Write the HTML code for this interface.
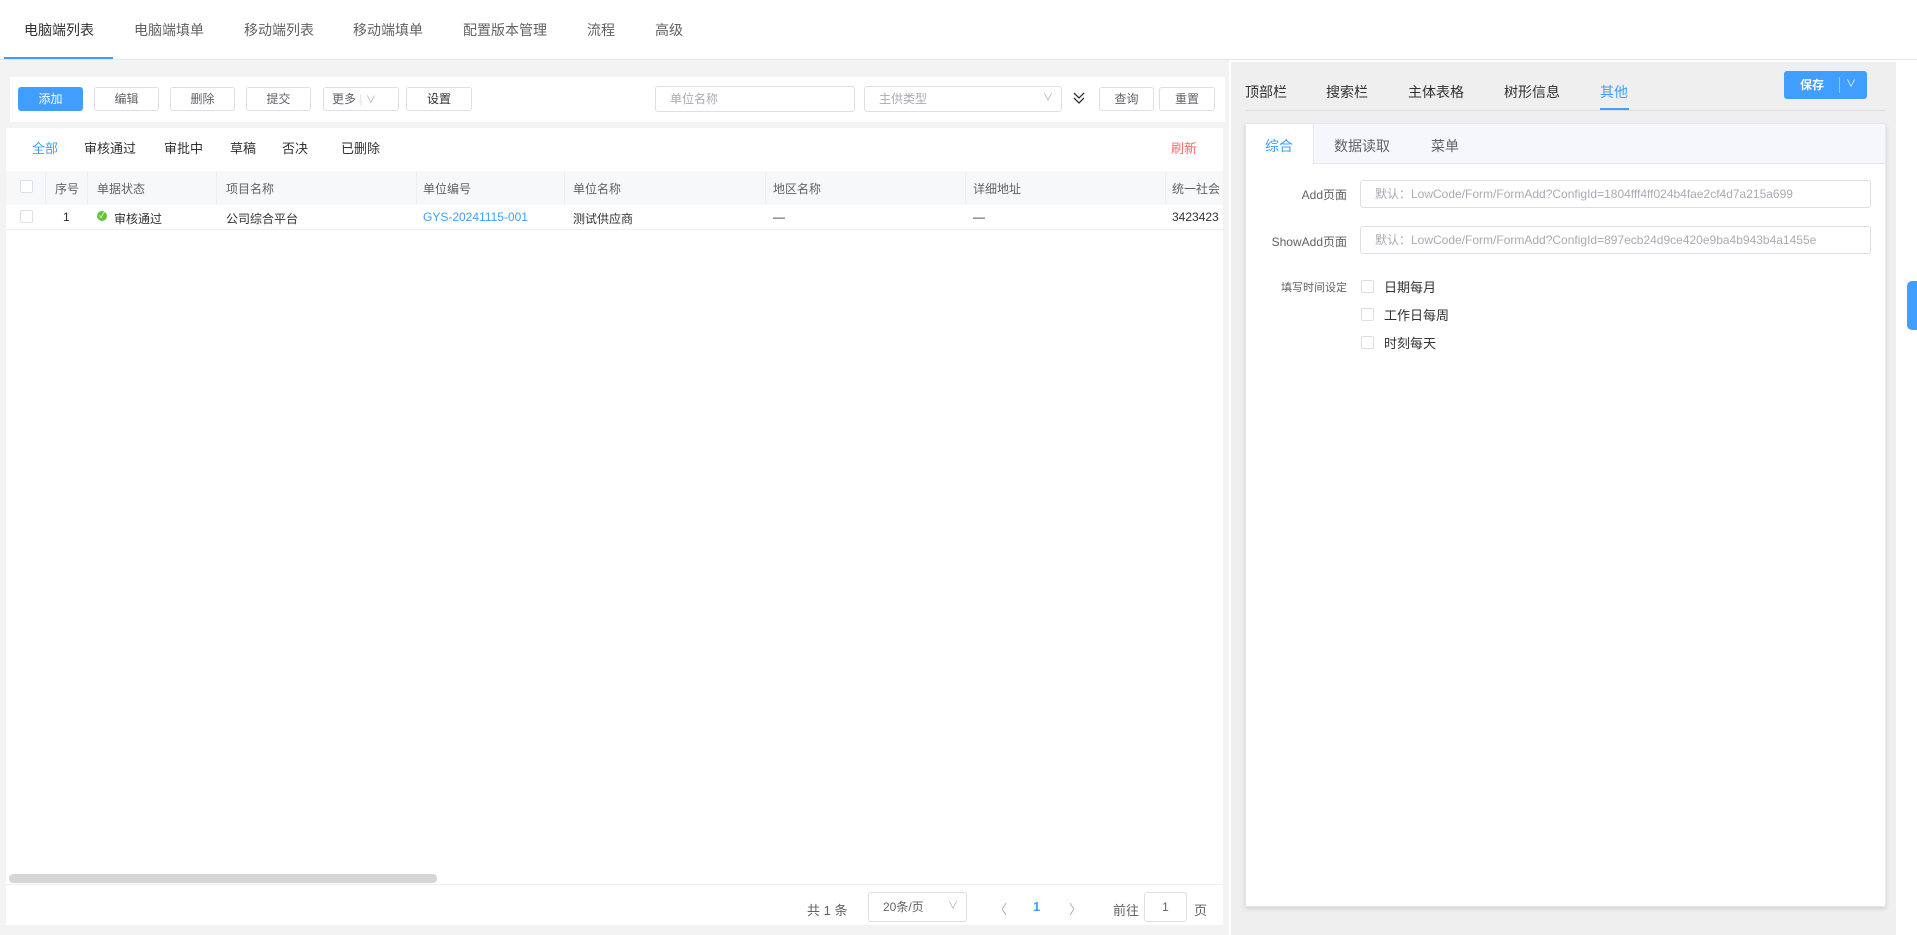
<!DOCTYPE html>
<html><head><meta charset="utf-8"><style>
*{box-sizing:border-box;margin:0;padding:0}
body{width:1917px;height:935px;background:#fff;font-family:"Liberation Sans","Noto Sans CJK SC",sans-serif;color:#303133;position:relative;overflow:hidden;font-size:12px}
.a{position:absolute;white-space:nowrap}
.btn{position:absolute;top:87px;height:24px;border:1px solid #dcdfe6;border-radius:3px;background:#fff;color:#606266;font-size:12px;text-align:center;line-height:22px}
.inp{position:absolute;border:1px solid #dcdfe6;border-radius:3px;background:#fff;color:#a8abb2;font-size:12px;padding-left:14px;line-height:24px}
.th{position:absolute;top:180px;color:#606266;font-size:12px}
.vl{position:absolute;top:171px;height:34px;width:1px;background:#ebeef5}
.cb{position:absolute;width:13px;height:13px;border:1px solid #dcdfe6;background:#fff;border-radius:2px}
</style></head><body>
<div class="a" style="left:24px;top:20px;font-size:14px;color:#303133">电脑端列表</div>
<div class="a" style="left:134px;top:20px;font-size:14px;color:#606266">电脑端填单</div>
<div class="a" style="left:244px;top:20px;font-size:14px;color:#606266">移动端列表</div>
<div class="a" style="left:353px;top:20px;font-size:14px;color:#606266">移动端填单</div>
<div class="a" style="left:463px;top:20px;font-size:14px;color:#606266">配置版本管理</div>
<div class="a" style="left:587px;top:20px;font-size:14px;color:#606266">流程</div>
<div class="a" style="left:655px;top:20px;font-size:14px;color:#606266">高级</div>
<div class="a" style="left:0;top:59px;width:1917px;height:1px;background:#e4e7ed"></div>
<div class="a" style="left:4px;top:57px;width:109px;height:2px;background:#409eff"></div>
<div class="a" style="left:0;top:60px;width:1229px;height:875px;background:#f3f3f3"></div>
<div class="a" style="left:10px;top:77px;width:1215px;height:45px;background:#fff"></div>
<div class="btn" style="left:18px;width:65px;background:#409eff;border-color:#409eff;color:#fff">添加</div>
<div class="btn" style="left:94px;width:65px">编辑</div>
<div class="btn" style="left:170px;width:65px">删除</div>
<div class="btn" style="left:246px;width:65px">提交</div>
<div class="btn" style="left:323px;width:76px;text-align:left;padding-left:8px">更多 <span style="color:#dcdfe6">|</span> <span style="font-size:10px;color:#a8abb2">∨</span></div>
<div class="btn" style="left:406px;width:66px;color:#303133">设置</div>
<div class="inp" style="left:655px;top:86px;width:200px;height:26px">单位名称</div>
<div class="inp" style="left:864px;top:86px;width:198px;height:26px">主供类型<span style="position:absolute;right:8px;font-size:10px">∨</span></div>
<svg class="a" style="left:1072px;top:91px" width="14" height="14" viewBox="0 0 14 14"><path d="M2 2 L7 7 L12 2 M2 7 L7 12 L12 7" fill="none" stroke="#303133" stroke-width="1.3"/></svg>
<div class="btn" style="left:1099px;width:55px">查询</div>
<div class="btn" style="left:1159px;width:56px">重置</div>
<div class="a" style="left:6px;top:128px;width:1217px;height:797px;background:#fff"></div>
<div class="a" style="left:32px;top:138px;font-size:13px;color:#409eff">全部</div>
<div class="a" style="left:84px;top:138px;font-size:13px">审核通过</div>
<div class="a" style="left:164px;top:138px;font-size:13px">审批中</div>
<div class="a" style="left:230px;top:138px;font-size:13px">草稿</div>
<div class="a" style="left:282px;top:138px;font-size:13px">否决</div>
<div class="a" style="left:341px;top:138px;font-size:13px">已删除</div>
<div class="a" style="left:1171px;top:138px;font-size:13px;color:#f56c6c">刷新</div>
<div class="a" style="left:6px;top:171px;width:1217px;height:34px;background:#f7f8fa"></div>
<div class="cb" style="left:20px;top:180px"></div>
<div class="th" style="left:55px">序号</div><div class="th" style="left:97px">单据状态</div>
<div class="th" style="left:226px">项目名称</div><div class="th" style="left:423px">单位编号</div>
<div class="th" style="left:573px">单位名称</div><div class="th" style="left:773px">地区名称</div>
<div class="th" style="left:973px">详细地址</div><div class="th" style="left:1172px">统一社会</div>
<div class="vl" style="left:45px"></div><div class="vl" style="left:87px"></div><div class="vl" style="left:216px"></div><div class="vl" style="left:416px"></div><div class="vl" style="left:564px"></div><div class="vl" style="left:765px"></div><div class="vl" style="left:965px"></div><div class="vl" style="left:1165px"></div>
<div class="a" style="left:6px;top:205px;width:1217px;height:25px;background:#fff;border-bottom:1px solid #f0f0f0"></div>
<div class="cb" style="left:20px;top:210px"></div>
<div class="a" style="left:63px;top:210px">1</div>
<div class="a" style="left:97px;top:211px;width:10px;height:10px;border-radius:50%;background:#67c23a;color:#fff;font-size:8px;line-height:10px;text-align:center">✓</div>
<div class="a" style="left:114px;top:210px">审核通过</div>
<div class="a" style="left:226px;top:210px">公司综合平台</div>
<div class="a" style="left:423px;top:210px;color:#409eff">GYS-20241115-001</div>
<div class="a" style="left:573px;top:210px">测试供应商</div>
<div class="a" style="left:773px;top:210px">—</div>
<div class="a" style="left:973px;top:210px">—</div>
<div class="a" style="left:1172px;top:210px">3423423</div>
<div class="a" style="left:9px;top:874px;width:428px;height:9px;border-radius:4px;background:#d6d6d6"></div>
<div class="a" style="left:6px;top:884px;width:1217px;height:1px;background:#ebeef5"></div>
<div class="a" style="left:807px;top:900px;font-size:13px;color:#606266">共 1 条</div>
<div class="inp" style="left:868px;top:892px;width:99px;height:30px;line-height:28px;color:#606266">20条/页<span style="position:absolute;right:8px;font-size:10px;color:#a8abb2">∨</span></div>
<div class="a" style="left:994px;top:899px;font-size:13px;color:#a8abb2">〈</div>
<div class="a" style="left:1033px;top:899px;font-size:13px;color:#409eff;font-weight:bold">1</div>
<div class="a" style="left:1069px;top:899px;font-size:13px;color:#a8abb2">〉</div>
<div class="a" style="left:1113px;top:900px;font-size:13px;color:#606266">前往</div>
<div class="inp" style="left:1144px;top:892px;width:43px;height:30px;line-height:28px;color:#606266;padding:0;text-align:center">1</div>
<div class="a" style="left:1194px;top:900px;font-size:13px;color:#606266">页</div>
<div class="a" style="left:1231px;top:62px;width:665px;height:873px;background:#efefef"></div>
<div class="a" style="left:1245px;top:82px;font-size:14px">顶部栏</div>
<div class="a" style="left:1326px;top:82px;font-size:14px">搜索栏</div>
<div class="a" style="left:1408px;top:82px;font-size:14px">主体表格</div>
<div class="a" style="left:1504px;top:82px;font-size:14px">树形信息</div>
<div class="a" style="left:1600px;top:82px;font-size:14px;color:#409eff">其他</div>
<div class="a" style="left:1245px;top:110px;width:641px;height:1px;background:#dcdfe6"></div>
<div class="a" style="left:1600px;top:108px;width:29px;height:2px;background:#409eff"></div>
<div class="a" style="left:1784px;top:71px;width:83px;height:28px;background:#409eff;border-radius:3px;color:#fff;font-size:12px;font-weight:bold;line-height:28px;padding-left:16px">保存<span style="position:absolute;left:55px;top:6px;width:1px;height:16px;background:#8cc5ff"></span><span style="position:absolute;left:62px;font-size:10px;font-weight:normal">∨</span></div>
<div class="a" style="left:1245px;top:123px;width:641px;height:784px;background:#fff;box-shadow:0 2px 4px rgba(0,0,0,.12);border:1px solid #e4e7ed"></div>
<div class="a" style="left:1245px;top:123px;width:641px;height:41px;background:#f5f7fa;border:1px solid #e4e7ed"></div>
<div class="a" style="left:1246px;top:124px;width:68px;height:41px;background:#fff;border-right:1px solid #e4e7ed"></div>
<div class="a" style="left:1265px;top:136px;font-size:14px;color:#409eff">综合</div>
<div class="a" style="left:1334px;top:136px;font-size:14px;color:#606266">数据读取</div>
<div class="a" style="left:1431px;top:136px;font-size:14px;color:#606266">菜单</div>
<div class="a" style="left:1247px;top:186px;width:100px;text-align:right;color:#606266">Add页面</div>
<div class="inp" style="left:1360px;top:180px;width:511px;height:28px;line-height:26px">默认：LowCode/Form/FormAdd?ConfigId=1804fff4ff024b4fae2cf4d7a215a699</div>
<div class="a" style="left:1247px;top:233px;width:100px;text-align:right;color:#606266">ShowAdd页面</div>
<div class="inp" style="left:1360px;top:226px;width:511px;height:28px;line-height:26px">默认：LowCode/Form/FormAdd?ConfigId=897ecb24d9ce420e9ba4b943b4a1455e</div>
<div class="a" style="left:1247px;top:279px;width:100px;text-align:right;color:#606266;font-size:11px">填写时间设定</div>
<div class="cb" style="left:1361px;top:280px"></div><div class="a" style="left:1384px;top:277px;font-size:13px">日期每月</div>
<div class="cb" style="left:1361px;top:308px"></div><div class="a" style="left:1384px;top:305px;font-size:13px">工作日每周</div>
<div class="cb" style="left:1361px;top:336px"></div><div class="a" style="left:1384px;top:333px;font-size:13px">时刻每天</div>
<div class="a" style="left:1907px;top:281px;width:10px;height:49px;background:#409eff;border-radius:5px 0 0 5px"></div>
</body></html>
